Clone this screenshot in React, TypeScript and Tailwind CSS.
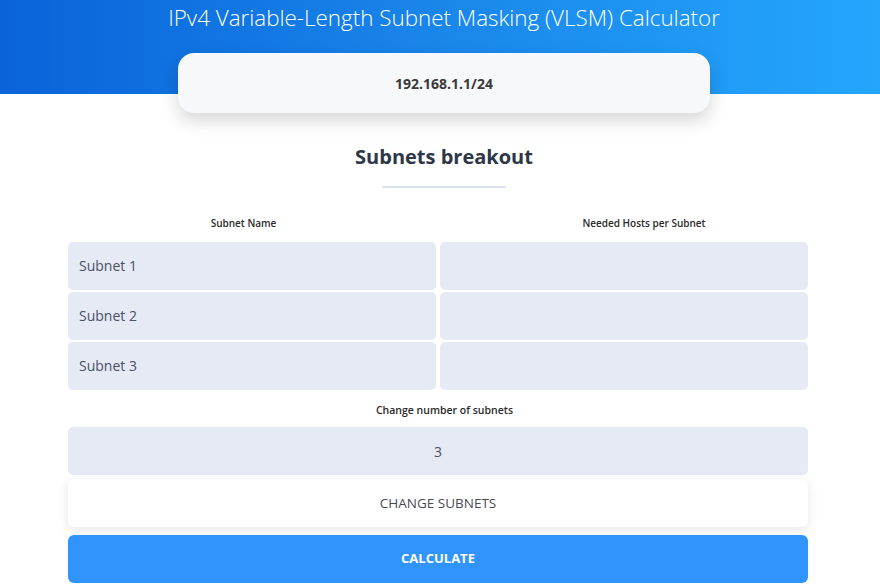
import React from "react";

export default function App() {
  const rows = ["Subnet 1", "Subnet 2", "Subnet 3"];
  return (
    <div className="min-h-[585px] w-full bg-white" style={{ fontFamily: '"Open Sans", "Noto Sans", sans-serif' }}>
      <div className="h-[94px] bg-gradient-to-r from-[#0b63d9] via-[#1a86ea] to-[#24a6fd] pl-[8px]">
        <h1 className="pt-[3px] text-center text-[22.4px] font-light leading-[30px] text-white">
          IPv4 Variable-Length Subnet Masking (VLSM) Calculator
        </h1>
      </div>
      <div className="-mt-[41px] flex justify-center pl-[8px]">
        <div className="flex h-[60px] w-[532px] items-center justify-center rounded-[16px] bg-[#f7f8fa] shadow-[0_8px_18px_rgba(0,0,0,0.16)]">
          <span className="text-[14px] font-bold text-[#3a3a3a]">192.168.1.1/24</span>
        </div>
      </div>
      <h2 className="mt-[31px] pl-[8px] text-center text-[20px] font-bold leading-[26px] text-[#2d3748]">Subnets breakout</h2>
      <div className="ml-[382px] mt-[16px] h-[2px] w-[124px] bg-[#dbe3ef]" />
      <div className="ml-[68px] mt-[28px] grid w-[740px] grid-cols-2 gap-x-[4px] gap-y-[2px]">
        <div className="pb-[10px] pr-[17px] text-center text-[10px] font-semibold leading-[14px] text-[#2a2a2a]">Subnet Name</div>
        <div className="pb-[10px] pl-[40px] text-center text-[10px] font-semibold leading-[14px] text-[#2a2a2a]">Needed Hosts per Subnet</div>
        {rows.map((r) => (
          <React.Fragment key={r}>
            <div className="flex h-[48px] items-center rounded-[5px] bg-[#e6eaf5] px-[11px] pb-[2px] text-[14px] text-[#4a5068]">{r}</div>
            <div className="h-[48px] rounded-[5px] bg-[#e6eaf5]" />
          </React.Fragment>
        ))}
      </div>
      <div className="ml-[68px] mt-[13px] flex w-[740px] flex-col">
        <div className="pl-[13px] text-center text-[10.5px] font-semibold leading-[14px] text-[#2a2a2a]">Change number of subnets</div>
        <div className="mt-[10px] flex h-[48px] items-center justify-center rounded-[5px] bg-[#e6eaf5] text-[14px] text-[#4a5068]">3</div>
        <div className="mt-[4px] flex h-[48px] items-center justify-center rounded-[6px] bg-white text-[13.5px] text-[#4a4a55] shadow-[0_3px_12px_rgba(0,0,0,0.1)]">CHANGE SUBNETS</div>
        <div className="mt-[8px] flex h-[48px] items-center justify-center rounded-[6px] bg-[#3194fc] text-[13px] font-bold text-white">CALCULATE</div>
      </div>
    </div>
  );
}
